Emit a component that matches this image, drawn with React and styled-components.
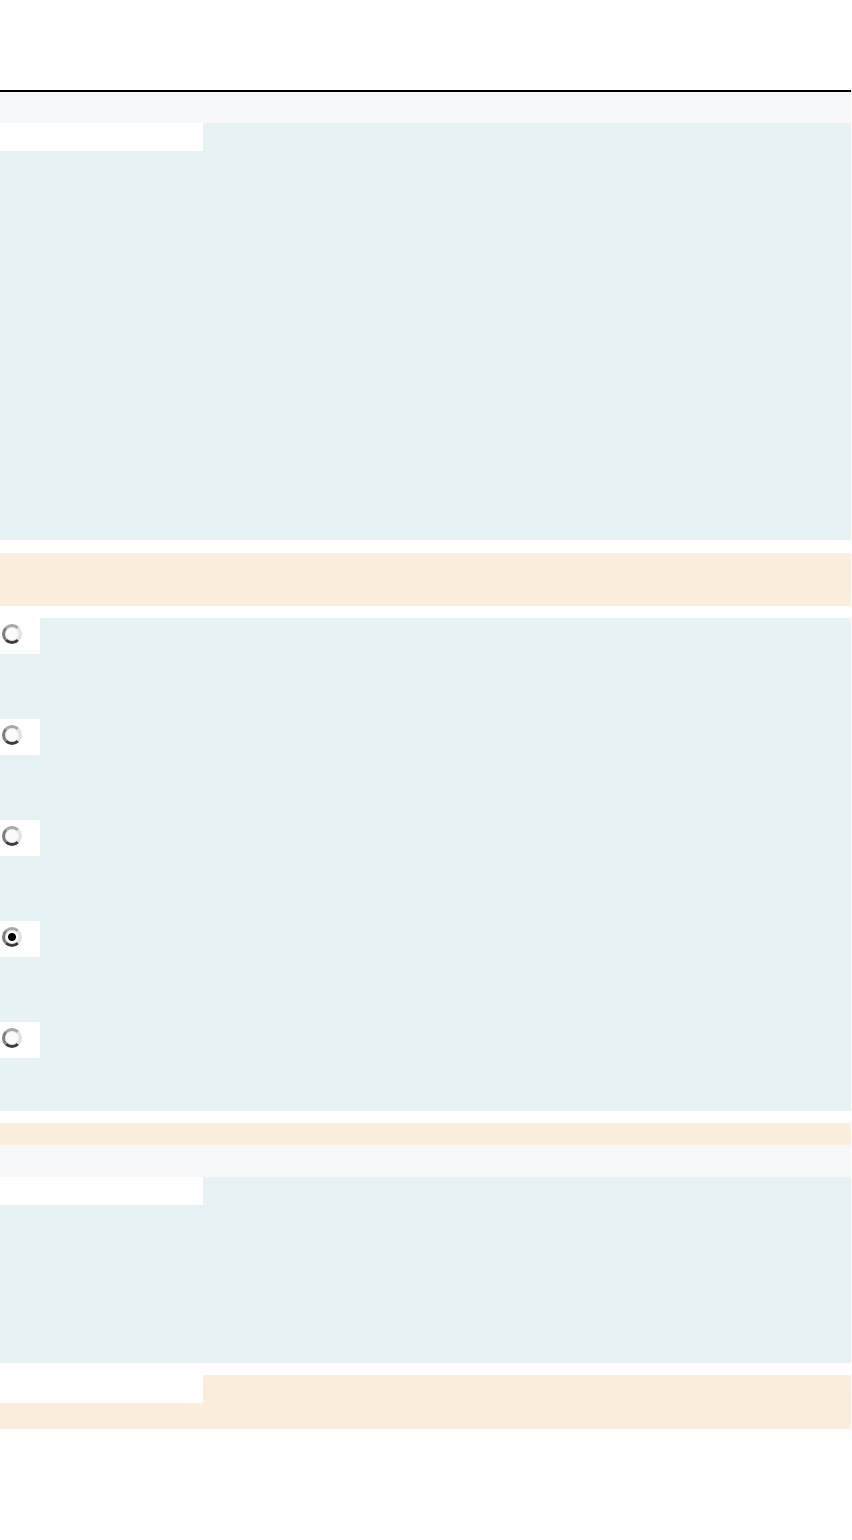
import React from "react";
import styled, { createGlobalStyle } from "styled-components";

const colors = {
  blue: "#e6f2f4",
  cream: "#fbeedc",
  grey: "#f7f8fa",
  white: "#ffffff",
};

const GlobalStyle = createGlobalStyle`
  * {
    box-sizing: border-box;
  }

  html, body, #root {
    margin: 0;
    padding: 0;
  }

  body {
    background: #ffffff;
    font-family: "Liberation Sans", Arial, sans-serif;
  }
`;

const Page = styled.div`
  width: 851px;
  padding-top: 90px;
  padding-bottom: 111px;
`;

const Rule = styled.hr`
  margin: 0;
  border: 0;
  height: 2px;
  background: #000000;
`;

const Bar = styled.div`
  height: ${(p) => p.$height}px;
  margin-top: ${(p) => p.$gap || 0}px;
  background: ${(p) => colors[p.$tone]};
`;

const Panel = styled.section`
  height: ${(p) => p.$height}px;
  margin-top: ${(p) => p.$gap || 0}px;
  background: ${(p) => colors[p.$tone]};
`;

const Tab = styled.div`
  width: 203px;
  height: 28px;
  background: ${colors.white};
`;

const OptionList = styled.fieldset`
  margin: 12px 0 0;
  padding: 0;
  border: 0;
  min-width: 0;
  display: flex;
  flex-direction: column;
  gap: 12px;
  background: ${colors.blue};
`;

const OptionRow = styled.label`
  display: flex;
  align-items: flex-start;
  height: 89px;
`;

const RadioCell = styled.span`
  display: flex;
  width: 40px;
  height: 36px;
  padding: 6px 0 0 2px;
  background: ${colors.white};
`;

// old-style bevelled radio: dark left edge, pale right, dark notch at the bottom
const Radio = styled.input.attrs({ type: "radio" })`
  appearance: none;
  margin: 0;
  width: 20px;
  height: 20px;
  border-radius: 50%;
  border: 3px solid #7d7d7d;
  border-top-color: #a8a8a8;
  border-right-color: #e2e2e2;
  border-bottom-color: #3c3c3c;
  background: #fbfbfb;
  box-shadow: inset 0 0 0 1px #ececec;

  &:checked {
    background: radial-gradient(circle, #000 0 3.5px, #fbfbfb 4.5px);
  }
`;

const options = ["a", "b", "c", "d", "e"];

export default function App() {
  return (
    <Page>
      <GlobalStyle />
      <Rule />
      <Bar $tone="grey" $height={31} />
      <Panel $tone="blue" $height={417}>
        <Tab />
      </Panel>
      <Bar $tone="cream" $height={53} $gap={13} />

      <OptionList>
        {options.map((opt) => (
          <OptionRow key={opt}>
            <RadioCell>
              <Radio name="answer" value={opt} defaultChecked={opt === "d"} />
            </RadioCell>
          </OptionRow>
        ))}
      </OptionList>

      <Bar $tone="cream" $height={22} $gap={12} />
      <Bar $tone="grey" $height={32} />
      <Panel $tone="blue" $height={186}>
        <Tab />
      </Panel>
      <Panel $tone="cream" $height={54} $gap={12}>
        <Tab />
      </Panel>
    </Page>
  );
}
